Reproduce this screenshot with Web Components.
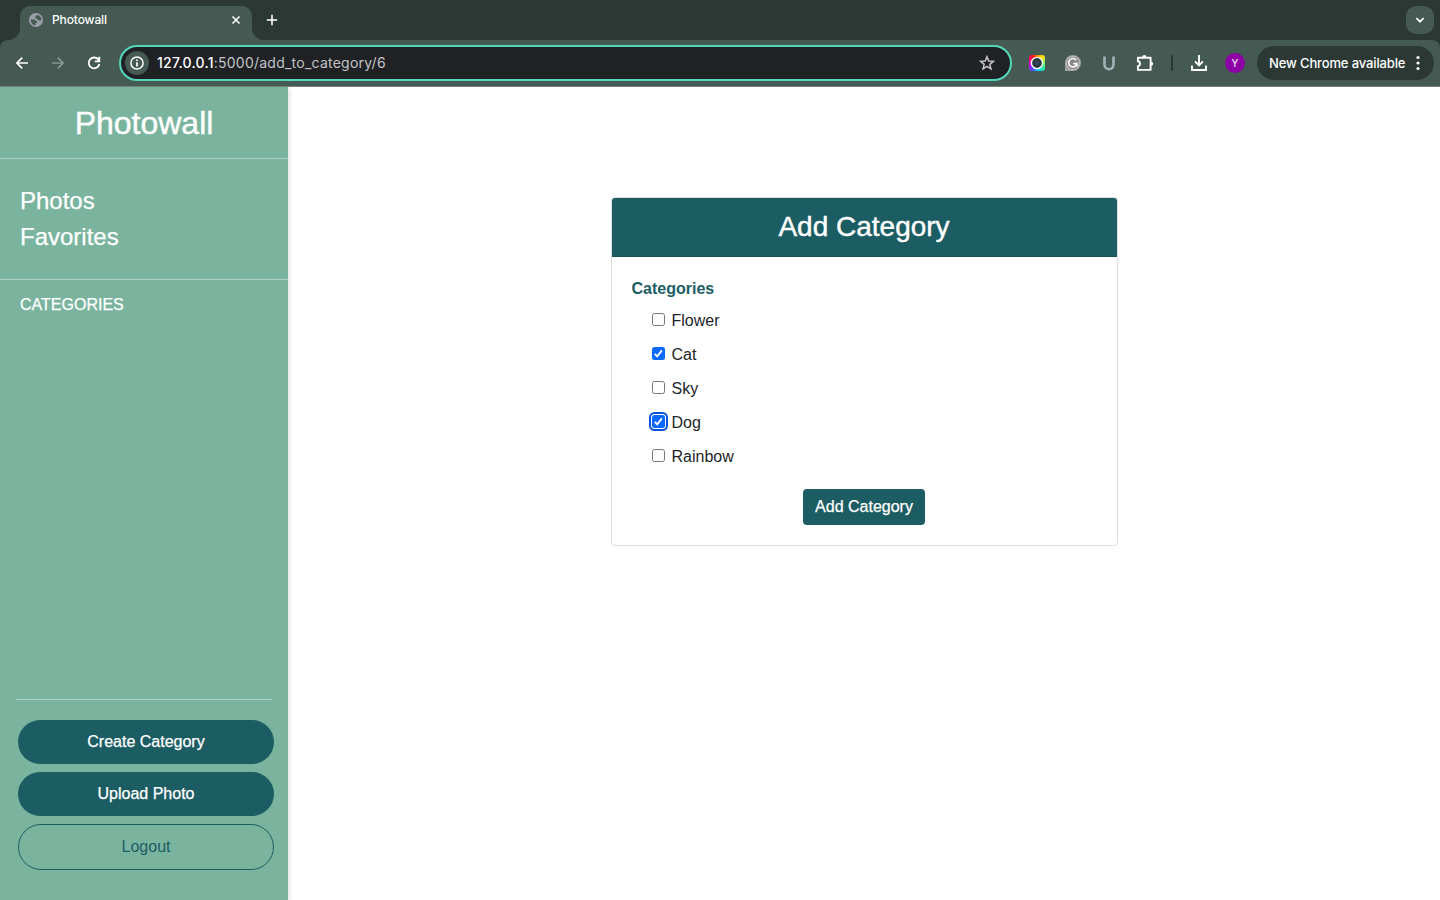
<!DOCTYPE html>
<html lang="en">
<head>
<meta charset="utf-8">
<title>Photowall</title>
<style>
html,body{margin:0;height:100%;overflow:hidden;background:#fff}
body{display:flex;flex-direction:column;font-family:"Liberation Sans",Arial,sans-serif;font-size:16px;color:#212529}
</style>
</head>
<body>
<browser-tabs></browser-tabs>
<browser-toolbar></browser-toolbar>
<photo-app></photo-app>
<script>
function define(name, html){
  customElements.define(name, class extends HTMLElement{
    constructor(){super();this.attachShadow({mode:'open'}).innerHTML=html;}
  });
}

define('browser-tabs', `<style>
:host{display:flex;box-sizing:border-box;height:40px;flex:none;background:#2b3834;font-family:Inter,sans-serif;color:#fff;padding:6px 6px 0 20px}
.tab{position:relative;box-sizing:border-box;width:232px;height:34px;background:#445a52;border-radius:10px 10px 0 0;display:flex;align-items:center;padding:0 10px 6px 9px;font-size:12px;font-weight:500}
.tab:before,.tab:after{content:"";position:absolute;bottom:0;width:12px;height:12px}
.tab:before{left:-12px;background:radial-gradient(circle at 0 0,transparent 11.5px,#445a52 12.5px)}
.tab:after{right:-12px;background:radial-gradient(circle at 100% 0,transparent 11.5px,#445a52 12.5px)}
.name{flex:1;margin-left:9px;letter-spacing:-.12px;padding-bottom:1px}
svg{display:block;flex:none}
.plus{margin:8px 0 0 14px}
.menu{margin-left:auto;width:28px;height:28px;border-radius:10px;background:#445a52;display:grid;place-items:center}
</style>
<div class="tab">
<svg width="14" height="14" viewBox="0 0 14 14"><circle cx="7" cy="7" r="7" fill="#9b9fa9"/><path d="M2 6.2 5 6.4c1.2.2 1.5 1.4 2.6 1.6.9.3.8 1.5.1 1.7l-1.3.5v2.2C3.400 12 1.500 9.600 2 6.200ZM8 1.700c2.700.5 4.400 2.500 4.400 5.100l-1.400 1-2.400-.8-.8-1.500-1.900-.6-.1-1.100 1.600-.5Z" fill="#445a52"/></svg>
<span class="name">Photowall</span>
<svg width="12" height="12" viewBox="0 0 12 12"><path d="m2.500 2.500 7 7m0-7-7 7" stroke="#fff" stroke-width="1.500"/></svg>
</div>
<svg class="plus" width="12" height="12" viewBox="0 0 12 12"><path d="M6 .8v10.400M.8 6h10.400" stroke="#fff" stroke-width="1.600"/></svg>
<div class="menu"><svg width="10" height="8" viewBox="0 0 10 8"><path d="m1.300 2 3.700 3.700L8.700 2" fill="none" stroke="#fff" stroke-width="1.700"/></svg></div>`);

define('tool-icon', `<style>:host{display:grid;place-items:center;flex:none;width:36px;height:36px}</style><slot></slot>`);

define('browser-toolbar', `<style>
:host{display:block;flex:none;height:47px;background:linear-gradient(#2b3834 50%,#445a52 50%);font-family:Inter,sans-serif;color:#fff}
.bar{display:flex;align-items:center;box-sizing:border-box;height:47px;background:#445a52;border-bottom:1px solid #73807b;padding:0 6px 0 4px;border-radius:8px 8px 0 0}
svg{display:block}
.url{box-sizing:border-box;width:893px;height:36px;border:2px solid #54d6bb;border-radius:18px;background:#202125;margin-left:7px;display:flex;align-items:center;padding:0 15px 0 4px;font-size:14px;color:#c2c4c6;letter-spacing:.24px}
.info{width:24px;height:24px;border-radius:50%;background:#445a52;display:grid;place-items:center;margin-right:8px;flex:none}
b{font-weight:500;color:#fff}
.text{flex:1;white-space:nowrap;padding-bottom:1px}
.ext{margin-left:7px;display:flex}
.sep{width:2px;height:16px;background:#2b3834;margin:0 8px;border-radius:1px}
.avatar{width:20px;height:20px;border-radius:50%;background:#8e00a5;display:grid;place-items:center;font-size:10px}
.update{box-sizing:border-box;width:177px;height:34px;border-radius:17px;background:#2b3834;margin-left:4px;display:flex;align-items:center;padding:0 14px 0 12px;font-size:13px;font-weight:500;letter-spacing:-.13px;white-space:nowrap;justify-content:space-between}
.rainbow{grid-area:1/1;width:16px;height:16px;border-radius:3px;background:conic-gradient(#ff8a00,#ffe600 12%,#45f37e 30%,#00cafa 48%,#5147ff 60%,#d900e8 72%,#ff0060 84%,#ff2500 94%,#ff8a00)}
.lens{display:grid;place-items:center}
.lens svg{grid-area:1/1}
</style><div class="bar">
<tool-icon><svg width="14" height="14" viewBox="0 0 14 14" fill="none" stroke="#fff" stroke-width="1.700"><path d="M13 7H2m5.200-5.300L1.900 7l5.300 5.300"/></svg></tool-icon>
<tool-icon><svg width="14" height="14" viewBox="0 0 14 14" fill="none" stroke="#899690" stroke-width="1.700"><path d="M1 7h11M6.800 1.700 12.100 7l-5.300 5.300"/></svg></tool-icon>
<tool-icon><svg width="14" height="14" viewBox="0 0 14 14" fill="none" stroke="#fff" stroke-width="1.800"><path d="M11.600 3.900A5.400 5.400 0 1 0 12.400 8M12.300.8v4.500H7.800"/></svg></tool-icon>
<div class="url"><span class="info"><svg width="14" height="14" viewBox="0 0 14 14"><circle cx="7" cy="7" r="6.100" fill="none" stroke="#fff" stroke-width="1.500"/><path d="M7 3.400v1.500M7 6.200v4.400" stroke="#fff" stroke-width="1.700"/></svg></span>
<span class="text"><b>127.0.0.1</b>:5000/add_to_category/6</span>
<svg width="16" height="16" viewBox="0 0 16 16"><path d="m8 1.700 1.750 4.250 4.600.38-3.500 3 1.080 4.500L8 11.400l-3.930 2.430 1.080-4.500-3.500-3 4.600-.38Z" fill="none" stroke="#c7c8c9" stroke-width="1.500"/></svg></div>
<div class="ext">
<tool-icon><span class="lens"><span class="rainbow"></span><svg width="16" height="16" viewBox="0 0 16 16"><circle cx="8" cy="8" r="5.600" fill="#32434a" stroke="#fff" stroke-width="1.400"/><circle cx="8" cy="8" r="3.300" fill="#34475a" stroke="#222e32"/></svg></span></tool-icon>
<tool-icon><svg width="16" height="16" viewBox="0 0 16 16"><path d="M0 16V8a8 8 0 1 1 8 8Z" fill="#a3a3a3"/><circle cx="8" cy="8" r="6.500" fill="#858585" stroke="#d6d6d6" stroke-width=".7"/><path d="M11.200 5.200A4.200 4.200 0 1 0 12 8.600H8.300m3.700-.3v3.300" fill="none" stroke="#fff" stroke-width="1.600"/></svg></tool-icon>
<tool-icon><svg width="12" height="15" viewBox="0 0 12 15"><path d="M1.500.5v8a4.500 4.700 0 0 0 9 0v-8" fill="none" stroke="#a0b0b5" stroke-width="2.700"/></svg></tool-icon>
<tool-icon><svg width="18" height="18" viewBox="0 0 18 18"><path d="M2 3.400h14v0" fill="none"/><path d="M1.900 3.700h12.700v12.200H1.900v-3.600c2.800-.4 2.800-4.600 0-5Z" fill="none" stroke="#fff" stroke-width="1.900" stroke-linejoin="round"/><path d="M6.200 3.200a2.100 2.100 0 0 1 4.200 0ZM15.100 7.700a2.100 2.100 0 0 1 0 4.200Z" fill="#fff"/></svg></tool-icon>
</div>
<span class="sep"></span>
<tool-icon><svg width="18" height="18" viewBox="0 0 18 18" fill="none" stroke="#fff" stroke-width="1.900"><path d="M9 1v10M5 7.300l4 4 4-4M2 11.500V16h14v-4.500"/></svg></tool-icon>
<tool-icon><span class="avatar">Y</span></tool-icon>
<div class="update"><span>New Chrome available</span><svg width="4" height="16" viewBox="0 0 4 16" fill="#fff"><circle cx="2" cy="2.500" r="1.600"/><circle cx="2" cy="8" r="1.600"/><circle cx="2" cy="13.500" r="1.600"/></svg></div></div>`);

define('pill-button', `<style>
:host{display:block}
button{display:block;box-sizing:border-box;width:256px;height:44px;border:0;border-radius:22px;background:#1c5d63;color:#fff;font:inherit;padding:0 0 1px;-webkit-text-stroke:.25px}
:host([outline]) button{height:46px;border:1px solid #1c5d63;border-radius:23px;background:none;color:#1c5d63;-webkit-text-stroke:0}
</style><button><slot></slot></button>`);

define('side-bar', `<style>
:host{display:flex;flex-direction:column;box-sizing:border-box;width:288px;flex:none;background:#7ab49e;color:#fff;box-shadow:0 0 6px rgba(0,0,0,.2);padding-bottom:30px;-webkit-text-stroke:.25px}
h1{box-sizing:border-box;margin:0;height:72px;font-size:32px;font-weight:400;line-height:72px;text-align:center;border-bottom:1px solid #b0d1c5;-webkit-text-stroke:.4px}
nav{box-sizing:border-box;height:121px;padding:24px 20px 0;font-size:24px;line-height:36px;border-bottom:1px solid #b0d1c5}
nav span{display:block}
.cat{padding:13px 20px 12px;line-height:24px}
.actions{margin-top:auto;display:grid;gap:8px;padding:20px 0 0 2px;margin-left:16px;margin-right:16px;border-top:1px solid #b0d1c5}
</style>
<h1>Photowall</h1>
<nav><span>Photos</span><span>Favorites</span></nav>
<div class="cat">CATEGORIES</div>
<div class="actions"><pill-button>Create Category</pill-button><pill-button>Upload Photo</pill-button><pill-button outline>Logout</pill-button></div>`);

define('check-row', `<style>
:host{display:flex;height:24px;line-height:24px;margin-bottom:10px}
i{box-sizing:border-box;width:13px;height:13px;margin:4px 7px 0 0;border:1px solid #767676;border-radius:2.500px;background:#fff}
svg{display:none}
:host([checked]) i{border:0;background:#0b69ff}
:host([checked]) svg{display:block}
:host([focused]) i{box-shadow:0 0 0 1px #fff,0 0 0 3px #0b55d9}
</style><i><svg width="13" height="13" viewBox="0 0 13 13"><path d="m2.700 6.800 2.500 2.500 4.700-6" fill="none" stroke="#fff" stroke-width="1.900"/></svg></i><slot></slot>`);

define('category-card', `<style>
:host{display:block;box-sizing:border-box;width:507px;height:349px;border:1px solid #dedede;border-radius:4px;background:#fff;overflow:hidden}
h2{box-sizing:border-box;height:59px;margin:0;background:#1c5d63;border-bottom:1px solid #18535a;color:#fff;font-size:28px;font-weight:400;line-height:57px;text-align:center;-webkit-text-stroke:.4px}
form{padding:20px 20px 0;display:flex;flex-direction:column}
strong{color:#1c5d63;line-height:24px;margin-bottom:8px}
.list{padding-left:20px}
button{align-self:center;width:122px;height:36px;margin-top:10px;padding:0;border:0;border-radius:4px;background:#1c5d63;color:#fff;font:inherit;-webkit-text-stroke:.25px}
</style>
<h2>Add Category</h2>
<form><strong>Categories</strong><div class="list"><check-row>Flower</check-row><check-row checked>Cat</check-row><check-row>Sky</check-row><check-row checked focused>Dog</check-row><check-row>Rainbow</check-row></div><button type="button">Add Category</button></form>`);

define('photo-app', `<style>
:host{display:flex;flex:1;min-height:0;overflow:hidden}
main{flex:1;display:flex;justify-content:center;align-items:flex-start;padding-top:110px}
</style><side-bar></side-bar><main><category-card></category-card></main>`);
</script>
</body>
</html>
